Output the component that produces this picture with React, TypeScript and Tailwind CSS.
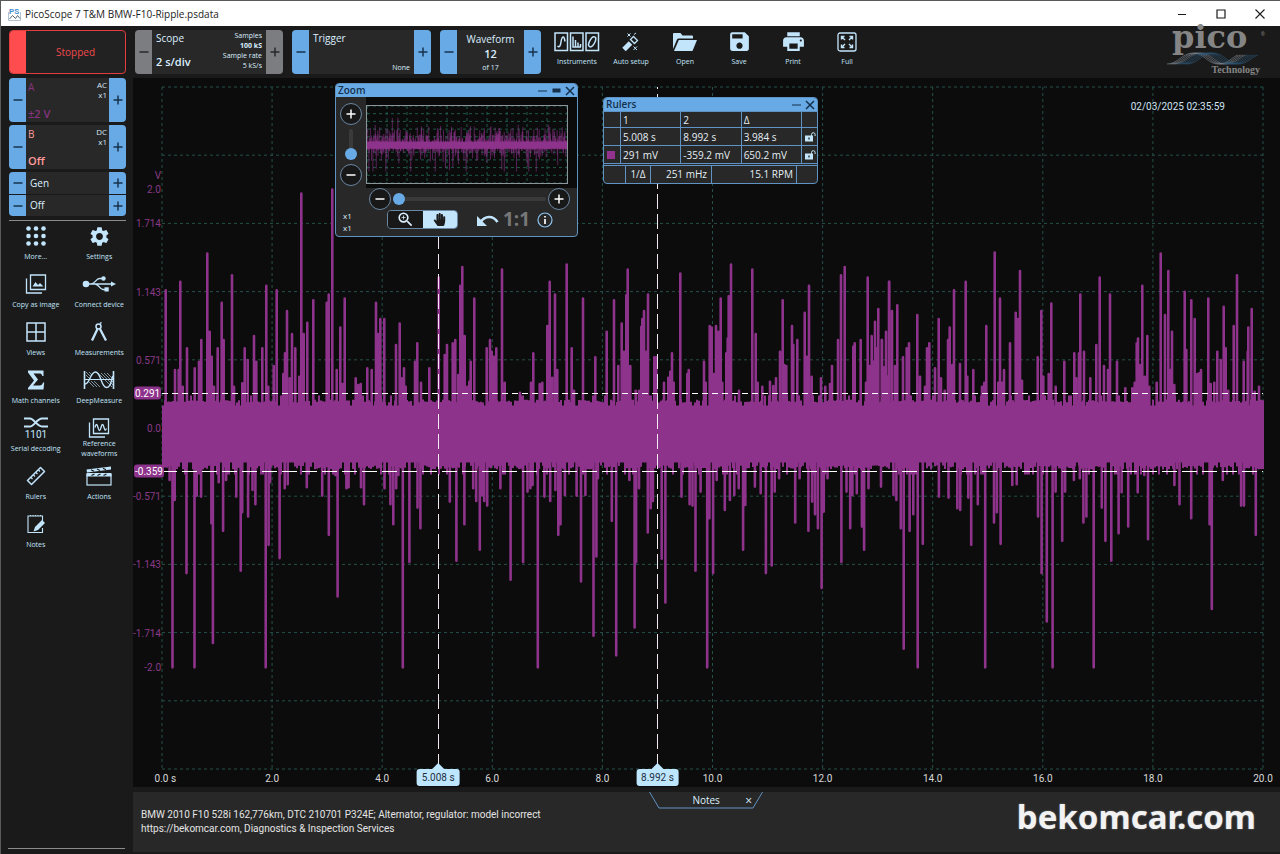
import React from "react";
import { MdSettings, MdSave, MdPrint, MdZoomIn } from "react-icons/md";
import { FaHandPaper } from "react-icons/fa";

/* ---------- waveform data ---------- */

const PLOT_W = 1101;
const PLOT_H = 683;
const V_MAX = 2.857;

type Segment = { x0: number; y0: number; sx: number; sy: number; pts: string };

const PEAKS: Segment[] = [
  {
    x0: -32, y0: 143.5, sx: 3, sy: 3,
    pts: "107,180;151,155;171,355;135,420;146,420;158,470;194,415;207,395;214,330;232,70;239,305;245,380;252,470;263,355;275,218;281,330;306,135;312,470;337,460;344,355;353,390;372,318;379,395;397,355;409,167;415,470;431,408;440,180;460,432;465,370;471,243;479,445;486,312;496,355;508,440;514,-110;521,312;532,278;550,210;590,218;596,193;607,-122;620,420;631,292;638,462;644,205;677,445;685,465;692,462;712,415;725,420;738,218;744,312;751,267;763,267;798,345;809,280;815,445;822,415;827,470;855,395;862,340;873,458;898,415;926,142;944,375;951,345;968,340;976,330;991,167;997,110;1004,318;985,435;1012,470;1018,455;1022,395;1033,205;1070,355;1080,330;1085,365;1092,380;1099,355;1116,118;1124,458",
  },
  {
    x0: 338, y0: 143.5, sx: 3, sy: 3,
    pts: "14,458;60,488;93,458;100,370;119,462;127,458;142,288;149,155;157,443;165,193;172,420;200,103;215,355;222,482;249,205;286,382;320,305;342,210;355,408;365,280;372,365;379,195;383,118;391,408;407,482;417,482;424,290;427,267;432,243;438,365;444,193;463,382;469,382;492,458;505,443;511,425;516,370;521,458;541,130;562,432;566,420;612,395;617,458;629,288;635,292;641,432;648,288;655,305;662,205;667,458;679,370;683,325;686,198;693,103;717,482;757,118;767,312;773,458;787,470;810,455;820,468;828,445;840,365;848,210;853,405;859,408;876,288;880,345;892,330;914,248;920,380;927,167;935,440;963,445;976,470;990,462;996,408;1014,330;1023,135;1034,110;1060,350;1064,340;1082,330;1098,458;1103,142;1109,408;1115,318;1120,395;1125,275;1130,355;1135,237;1145,330;1152,412;1158,305;1167,155",
  },
  {
    x0: 718, y0: 143.5, sx: 3, sy: 3,
    pts: "6,330;12,415;18,305;23,440;28,155;36,243;45,408;52,225;69,382;80,355;87,340;112,255;120,440;135,470;141,355;148,340;165,415;176,267;183,445;194,482;204,330;209,292;217,405;222,180;240,402;257,155;262,440;280,420;306,470;313,458;319,288;344,67;355,458;360,205;366,458;372,420;390,340;407,248;414,267;420,122;426,452;473,382;484,243;490,440;506,432;514,220;527,470;553,395;583,370;589,445;597,370;601,193;612,365;631,445;649,345;659,142;672,408;684,420;690,193;711,395;736,475;757,475;764,458;770,340;774,325;780,405;787,167;794,440;802,318;808,470;830,458;842,70;855,255;865,122;871,420;876,305;883,465;914,185;919,360;934,210;944,267;952,432;958,430;963,420;985,205;992,462;1003,458;1012,365;1022,390;1031,230;1037,355;1045,482;1061,288;1071,135;1091,395;1103,365;1105,292;1115,237;1124,485;1137,470",
  },
];

const TROUGHS: Segment[] = [
  {
    x0: -32, y0: 368.5, sx: 1.3635, sy: 3,
    pts: "54,75;58,638;61,135;77,355;88,638;91,122;97,125;111,205;113,565;121,82;127,228;131,75;145,125;151,348;153,172;161,185;167,105;171,148;185,638;189,270;191,82;204,310;211,100;215,88;241,97;262,122;271,240;280,60;283,425;295,100;298,97;315,97;319,148;347,100;355,148;359,208;363,100;366,60;372,638;381,322;392,158;396,220;436,140;445,318;456,208;468,100;472,138;477,285;480,120;483,138;487,152;505,100;519,375;536,322;542,110;546,100;549,90;556,638;565,125;573,138;580,105;584,240;587,208;593,120;609,122;615,380;621,120;632,543;636,305;638,70;657,198;663,602;681,75;688,518;690,322;694,100;706,233;710,160;713,138;725,312;730,443;752,125;763,148;767,152;771,348;778,110;787,638;790,190;795,355;800,75;811,165;818,135;824,120;830,100;836,285;839,150;852,95;860,115;867,355;875,332;879,110;885,70;907,203;913,70;925,228;930,140;934,178;938,220;943,400;946,170;951,70;970,322;977,110;982,220;985,120;991,115;998,215;1001,285;1007,100;1024,95;1041,120;1045,135;1051,220;1055,582;1063,228;1068,178;1074,638;1081,267;1103,125;1116,128;1128,160;1132,165;1143,128;1147,270;1156,148;1166,638;1178,203;1182,172;1187,267;1203,90;1209,88;1238,185;1243,355;1250,500;1258,638;1262,110;1271,258;1275,110;1287,75;1295,70;1300,203;1304,185;1314,638;1325,158;1330,258;1338,318;1348,235;1352,112;1361,215;1374,112;1383,60;1388,253;1424,90;1431,148;1447,190;1472,208;1475,463;1490,75;1515,152;1519,152;1535,240",
  },
];

function toPath(segments: Segment[]): string {
  return segments
    .flatMap((s) =>
      s.pts.split(";").map((p) => {
        const [px, py] = p.split(",").map(Number);
        return `M${(s.x0 + px / s.sx).toFixed(1)} 345V${(s.y0 + py / s.sy).toFixed(1)}`;
      })
    )
    .join("");
}

function bandPath(): string {
  let seed = 7;
  const rnd = () => {
    seed = (seed * 16807) % 2147483647;
    return seed / 2147483647;
  };
  const top: string[] = [];
  const bottom: string[] = [];
  for (let x = 0; x < PLOT_W; x += 2) {
    const a = rnd();
    const t = a < 0.1 ? 319 : a > 0.9 ? 309 : 313 + rnd() * 3;
    const b = rnd();
    const u = b > 0.84 ? 388 : b < 0.2 ? 376 : 379 + rnd() * 4;
    top.push(`L${x} ${t.toFixed(1)}H${x + 2}`);
    bottom.unshift(`L${x + 2} ${u.toFixed(1)}H${x}`);
  }
  return `M0 345${top.join("")}${bottom.join("")}Z`;
}

const SPIKES = toPath(PEAKS) + toPath(TROUGHS);
const BAND = bandPath();

function Wave({ thin = false }: { thin?: boolean }) {
  const xs = Array.from({ length: 11 }, (_, i) => (i * PLOT_W) / 10);
  const ys = Array.from({ length: 11 }, (_, i) => (i * PLOT_H) / 10).filter((_, i) => i !== 5);
  return (
    <svg
      viewBox={`0 0 ${PLOT_W} ${PLOT_H}`}
      preserveAspectRatio="none"
      className="absolute inset-0 block h-full w-full overflow-visible"
      aria-hidden="true"
    >
      <g stroke={thin ? "#1f5b4a" : "#255049"} strokeWidth="1" strokeDasharray="3 3">
        {xs.map((x) => (
          <line key={x} x1={x} x2={x} y1="0" y2={PLOT_H} vectorEffect="non-scaling-stroke" />
        ))}
        {ys.map((y) => (
          <line key={y} y1={y} y2={y} x1="0" x2={PLOT_W} vectorEffect="non-scaling-stroke" />
        ))}
      </g>
      <path d={SPIKES} stroke="#8e338b" strokeWidth={thin ? 0.6 : 2.6} fill="none" strokeLinecap={thin ? "butt" : "round"} vectorEffect="non-scaling-stroke" />
      <path d={BAND} fill="#8e338b" />
    </svg>
  );
}

/* ---------- icons ---------- */

const ICE = "#c3e5fb";

const Svg = ({ w, h, children }: { w: number; h: number; children: React.ReactNode }) => (
  <svg width={w} height={h} viewBox={`0 0 ${w} ${h}`} fill="none" stroke="currentColor" aria-hidden="true">
    {children}
  </svg>
);

const Minus = () => (
  <Svg w={10} h={10}><path d="M.5 5h9" strokeWidth="1.5" /></Svg>
);
const Plus = () => (
  <Svg w={10} h={10}><path d="M.5 5h9M5 .5v9" strokeWidth="1.5" /></Svg>
);

const InstrumentsIcon = () => (
  <Svg w={46} h={20}>
    <g strokeWidth="1.5">
      <rect x="1" y="1" width="12.5" height="17.5" />
      <rect x="16.5" y="1" width="12.5" height="17.5" />
      <rect x="32" y="1" width="12.5" height="17.5" />
      <path d="M3.5 14c2 2 3-.5 3.500-4s1.500-5.500 2.500-5 1 2 1.500 4.500" />
      <path d="M19 4.500v10.500h8M21.500 8v7M24 10.500V15M26.500 12v3" />
      <ellipse cx="38.200" cy="9.800" rx="2.600" ry="5.500" transform="rotate(28 38.200 9.800)" />
    </g>
  </Svg>
);
const WandIcon = () => (
  <Svg w={20} h={20}>
    <path d="M3 17.500L9.500 11" strokeWidth="5" />
    <path d="M9.500 7.500l4 4 3-3-4-4z" strokeWidth="1.300" />
    <path d="M6.500 1.500l3 3M9.500 1.500l-3 3M13 2.500l2-1.500M12.500 14.500l3.500 3.500M16 14.500l-3.500 3.500" strokeWidth="1" />
  </Svg>
);
const FolderIcon = () => (
  <Svg w={24} h={20}>
    <path d="M0 17V2Q0 1 1 1h6.500l2 2.500H19q1 0 1 1V6.500H5.500Q4.500 6.500 4 7.500z" fill="currentColor" stroke="none" />
    <path d="M5.800 8H24l-4.300 10.500q-.3.500-1 .5H1z" fill="currentColor" stroke="none" />
  </Svg>
);
const FullIcon = () => (
  <Svg w={20} h={20}>
    <rect x="1" y="1" width="18" height="18" rx="2" strokeWidth="1.300" />
    <path d="M4.500 7.500v-3h3M12.500 4.500h3v3M15.500 12.500v3h-3M7.500 15.500h-3v-3M4.500 4.500l3.500 3.500M15.500 4.500l-3.500 3.500M15.500 15.500l-3.500-3.500M4.500 15.500l3.500-3.500" strokeWidth="1.400" />
  </Svg>
);
const DotsIcon = () => (
  <Svg w={20} h={20}>
    {[2.5, 10, 17.5].flatMap((y) => [2.5, 10, 17.5].map((x) => <circle key={`${x}-${y}`} cx={x} cy={y} r="2.300" fill="currentColor" stroke="none" />))}
  </Svg>
);
const CopyImageIcon = () => (
  <Svg w={22} h={20}>
    <path d="M5.500 1h15v14.500h-15zM1.500 4.500v14.500h15.500" strokeWidth="1.300" />
    <path d="M7.500 12.500l3-4.500 2.500 3 2-2 3.500 3.500z" fill="currentColor" stroke="none" />
  </Svg>
);
const UsbIcon = () => (
  <Svg w={34} h={18}>
    <circle cx="4" cy="9" r="3.300" fill="currentColor" stroke="none" />
    <path d="M4 9h26M9 9c4 0 5-5.500 8.500-5.500h3M13 9c4 0 4.500 5.500 8 5.500h2" strokeWidth="1.300" />
    <path d="M29 6.500l5 2.500-5 2.500z" fill="currentColor" stroke="none" />
    <circle cx="21.500" cy="3.500" r="2.200" fill="currentColor" stroke="none" />
    <rect x="22.500" y="12.300" width="4.200" height="4.200" fill="currentColor" stroke="none" />
  </Svg>
);
const ViewsIcon = () => (
  <Svg w={20} h={20}><path d="M1 1h18v18H1zM10 1v18M1 10h18" strokeWidth="1.500" /></Svg>
);
const CompassIcon = () => (
  <Svg w={18} h={20}>
    <circle cx="8.500" cy="4.500" r="2.500" strokeWidth="1.500" />
    <path d="M10 1.500l1.500-1" strokeWidth="1.500" />
    <path d="M7.500 7L2 18.500M10 7l6 11.500" strokeWidth="2.300" />
  </Svg>
);
const SigmaIcon = () => (
  <Svg w={18} h={20}>
    <path d="M1 0.500h15.500V6h-1.200C14.800 4 14 3.500 12 3.500H6.500L11 9.500 6 15.500h6.500c2 0 2.800-.8 3.500-3h1.200l-.7 7H1v-1.500L7 10.500 1 2.500z" fill="currentColor" stroke="none" />
  </Svg>
);
const DeepIcon = () => (
  <Svg w={32} h={20}>
    <path d="M1.500 1v18M30.500 1v18" strokeWidth="1.600" />
    <path d="M2 9.500h28" strokeWidth="1" />
    <path d="M2 14C7 14 7 2 12.500 2S18 17.500 23.500 17.500 28 8 30 6" strokeWidth="1.400" />
    <path d="M3 2l4 4M6 2l3 3M3 5l3 3M15 3l14 14M18 3l12 12M21 3l9 9M24 3l6 6M5 11l6 6M8 11l6 6M11 11l6 6" strokeWidth=".6" />
  </Svg>
);
const SerialIcon = () => (
  <svg width="26" height="22" viewBox="0 0 26 22" fill="none" stroke="currentColor" aria-hidden="true">
    <path d="M1 1.500h6c4 0 7 8 12 8h6M1 9.500h6c4 0 7-8 12-8h6" strokeWidth="2" />
    <text x="13" y="20.500" textAnchor="middle" fontSize="10" fontFamily="Roboto, sans-serif" fill="currentColor" stroke="none">1101</text>
  </svg>
);
const RefWaveIcon = () => (
  <Svg w={22} h={20}>
    <path d="M5.500 1h15v14.500h-15zM1.500 4.500V19h15.500" strokeWidth="1.300" />
    <path d="M7 9.500c1-4 2-4 3 0s2 4 3 0 2-4 3 0 1.500 3 2.500 1" strokeWidth="1.300" />
  </Svg>
);
const RulerIcon = () => (
  <Svg w={20} h={20}>
    <path d="M1.500 14.500L14.500 1.500l4 4L5.500 18.500z" strokeWidth="1.500" strokeLinejoin="round" />
    <path d="M5 11.500l1.500 1.500M7.500 9l1.500 1.500M10 6.500l1.500 1.500M12.500 4l1.500 1.500" strokeWidth="1.200" />
  </Svg>
);
const ClapperIcon = () => (
  <Svg w={26} h={20}>
    <rect x="1" y="8.700" width="24" height="10.300" strokeWidth="1.200" />
    <path d="M.5 3.500L25 .5v3L1 6.500zM.5 7h25v3.500H.5z" fill="currentColor" stroke="none" />
    <path d="M5 3.800l3 1.500M11 3l3 1.500M17 2.200l3 1.500M8.500 8l-3 1.500M14.500 8l-3 1.500M20.500 8l-3 1.500" stroke="#1a1a1a" strokeWidth="1.200" />
  </Svg>
);
const NotesIcon = () => (
  <Svg w={18} h={20}>
    <path d="M15.500 7V2H1v16.500h14.500V14" strokeWidth="1.100" />
    <path d="M3 1.500h11" strokeWidth="1.200" strokeDasharray="1 1.500" />
    <path d="M6.500 17.500l1.500-4.500 7-7 3 3-7 7z" fill="currentColor" stroke="none" />
  </Svg>
);
const UnlockIcon = () => (
  <Svg w={11} h={10}>
    <rect x="0" y="3.500" width="8" height="6" fill="currentColor" stroke="none" />
    <path d="M6.500 4V2.500a1.800 1.800 0 0 1 3.600 0V4" strokeWidth="1" />
    <path d="M4 5.500v2" stroke="#222" strokeWidth="1.300" />
  </Svg>
);
const UndoIcon = () => (
  <Svg w={22} h={14}>
    <path d="M3.500 9C8 2.500 16 2 20.500 9" strokeWidth="2.600" />
    <path d="M0 3v10h10z" fill="currentColor" stroke="none" />
  </Svg>
);

/* ---------- building blocks ---------- */

function Stepper({ label, tone = "blue", children }: { label: string; tone?: "blue" | "grey"; children: React.ReactNode }) {
  const side =
    tone === "blue"
      ? "flex w-[17px] shrink-0 items-center justify-center bg-[#68aae6] text-[#16324c]"
      : "flex w-[17px] shrink-0 items-center justify-center bg-[#7c7d80] text-[#26282a]";
  return (
    <div className="flex h-full overflow-hidden rounded bg-[#282828]">
      <button type="button" aria-label={`${label} down`} className={side}><Minus /></button>
      <div className="flex min-w-0 flex-1">{children}</div>
      <button type="button" aria-label={`${label} up`} className={side}><Plus /></button>
    </div>
  );
}

function Channel({ name, range, coupling, color }: { name: string; range: string; coupling: string; color: string }) {
  return (
    <div className="h-[44px]">
      <Stepper label={`Channel ${name}`}>
        <div className={`flex flex-1 flex-col justify-between pl-[2px] ${color}`}>
          <span className="text-[10px] font-medium leading-[18px]">{name}</span>
          <span className="text-[11px] font-semibold leading-4">{range}</span>
        </div>
        <div className="pr-[2px] text-right text-[8px] leading-[10px] text-[#d5e6f2]">
          <div className="pt-[2px]">{coupling}</div>
          <div>x1</div>
        </div>
      </Stepper>
    </div>
  );
}

function TopTool({ label, children }: { label: string; children: React.ReactNode }) {
  return (
    <button type="button" className="flex w-[54px] flex-col items-center text-[#c3e5fb]">
      <span className="flex h-[23px] items-center justify-center">{children}</span>
      <span className="mt-[3px] text-[7px] leading-[12px]">{label}</span>
    </button>
  );
}

function SideTool({ label, children }: { label: string; children: React.ReactNode }) {
  return (
    <button type="button" className="flex flex-col items-center text-[#c3e5fb]">
      <span className="flex h-5 items-center justify-center">{children}</span>
      <span className="flex h-[22px] items-center whitespace-pre-line text-center text-[7px] leading-[10px]">{label}</span>
    </button>
  );
}

const RoundButton = ({ label, children }: { label: string; children: React.ReactNode }) => (
  <button type="button" aria-label={label} className="flex h-[22px] w-[22px] shrink-0 items-center justify-center rounded-full border border-[#6a87a3] bg-[#181818] text-white">
    {children}
  </button>
);

function ZoomPanel() {
  return (
    <section aria-label="Zoom" className="absolute left-[202px] top-[5px] w-[243px] overflow-hidden rounded border border-[#5f93c4] bg-[#282828] text-[#dcefff]">
      <header className="flex h-[13px] items-center bg-[#68aae6] pl-[2px] pr-[2px] text-[#14304a]">
        <h2 className="flex-1 text-[10px] font-semibold leading-[13px]">Zoom</h2>
        <button type="button" aria-label="Minimise zoom" className="mr-[5px]"><Svg w={9} h={9}><path d="M0 5h9" /></Svg></button>
        <button type="button" aria-label="Dock zoom" className="mr-1"><Svg w={9} h={9}><path d="M.5 4.500h8" strokeWidth="4" /></Svg></button>
        <button type="button" aria-label="Close zoom"><Svg w={10} h={10}><path d="M1 1l8 8M9 1l-8 8" strokeWidth="1.500" /></Svg></button>
      </header>
      <div className="flex">
        <div className="flex w-[30px] flex-col items-center pb-[2px] pt-[6px]">
          <RoundButton label="Zoom in vertically"><Plus /></RoundButton>
          <input
            type="range" aria-label="Vertical zoom" defaultValue={0}
            className="mb-1 mt-1 h-[31px] w-3 appearance-none bg-transparent [direction:rtl] [writing-mode:vertical-lr] [&::-webkit-slider-runnable-track]:w-1 [&::-webkit-slider-runnable-track]:rounded [&::-webkit-slider-runnable-track]:bg-[#3a3a3a] [&::-webkit-slider-thumb]:-ml-1 [&::-webkit-slider-thumb]:h-3 [&::-webkit-slider-thumb]:w-3 [&::-webkit-slider-thumb]:appearance-none [&::-webkit-slider-thumb]:rounded-full [&::-webkit-slider-thumb]:bg-[#68aae6]"
          />
          <RoundButton label="Zoom out vertically"><Minus /></RoundButton>
        </div>
        <div className="flex-1 bg-[#0b0b0b] pb-1 pr-[9px] pt-2">
          <div className="relative h-[79px] overflow-hidden border border-[#8d9499]"><Wave thin /></div>
        </div>
      </div>
      <div className="flex items-center pl-[33px] pr-[7px]">
        <RoundButton label="Zoom out horizontally"><Minus /></RoundButton>
        <input
          type="range" aria-label="Horizontal zoom" defaultValue={0}
          className="mx-[2px] h-3 min-w-0 flex-1 appearance-none bg-transparent [&::-webkit-slider-runnable-track]:h-1 [&::-webkit-slider-runnable-track]:rounded [&::-webkit-slider-runnable-track]:bg-[#3a3a3a] [&::-webkit-slider-thumb]:-mt-1 [&::-webkit-slider-thumb]:h-3 [&::-webkit-slider-thumb]:w-3 [&::-webkit-slider-thumb]:appearance-none [&::-webkit-slider-thumb]:rounded-full [&::-webkit-slider-thumb]:bg-[#68aae6]"
        />
        <RoundButton label="Zoom in horizontally"><Plus /></RoundButton>
      </div>
      <div className="flex h-[26px] items-start pl-[7px]">
        <div className="w-[44px] text-[8px] leading-[12px]">
          <div>x1</div>
          <div>x1</div>
        </div>
        <div className="flex h-[19px] w-[71px] overflow-hidden rounded border border-[#6a87a3]">
          <button type="button" aria-label="Zoom tool" className="flex flex-1 items-center justify-center bg-[#181818] text-[#dcefff]"><MdZoomIn size={19} /></button>
          <button type="button" aria-label="Pan tool" className="flex flex-1 items-center justify-center bg-[#c3e5fb] text-[#1c1c1c]"><FaHandPaper size={13} /></button>
        </div>
        <button type="button" aria-label="Undo zoom" className="ml-[19px] mt-[3px] text-[#c3e5fb]"><UndoIcon /></button>
        <button type="button" className="ml-[4px] text-[19px] font-bold leading-[19px] text-[#77787a]">1:1</button>
        <button type="button" aria-label="Zoom information" className="ml-[7px] mt-[2px] text-[#8fc4ee]">
          <Svg w={16} h={16}><circle cx="8" cy="8" r="7" strokeWidth="1.200" /><path d="M8 7v5M8 4v1.600" stroke="#fff" strokeWidth="1.700" /></Svg>
        </button>
      </div>
    </section>
  );
}

function RulersPanel() {
  const cell = "border-r border-t border-[#5f93c4] px-[2px] py-0 font-normal";
  const lock = "border-t border-[#5f93c4] py-0 pl-[3px] pr-0 text-[#c3e5fb]";
  return (
    <section aria-label="Rulers" className="absolute left-[470px] top-[19px] w-[215px] overflow-hidden rounded border border-[#5f93c4] bg-[#282828] text-[10px] leading-[14px] text-[#e6eef4]">
      <header className="flex h-[13px] items-center bg-[#68aae6] pl-[2px] pr-[2px] text-[#14304a]">
        <h2 className="flex-1 text-[10px] font-semibold leading-[13px]">Rulers</h2>
        <button type="button" aria-label="Minimise rulers" className="mr-1"><Svg w={9} h={9}><path d="M0 5h9" /></Svg></button>
        <button type="button" aria-label="Close rulers"><Svg w={10} h={10}><path d="M1 1l8 8M9 1l-8 8" strokeWidth="1.500" /></Svg></button>
      </header>
      <table className="w-full table-fixed border-separate border-spacing-0 border-b border-[#5f93c4] text-left">
        <colgroup>
          <col className="w-[17px]" /><col /><col /><col /><col className="w-[15px]" />
        </colgroup>
        <tbody>
          <tr className="h-4">
            <td className={cell} />
            <th className={cell}>1</th><th className={cell}>2</th><th className={cell}>Δ</th>
            <td className={lock} />
          </tr>
          <tr className="h-[18px]">
            <td className={cell} />
            <td className={cell}>5.008 s</td><td className={cell}>8.992 s</td><td className={cell}>3.984 s</td>
            <td className={lock}><UnlockIcon /></td>
          </tr>
          <tr className="h-[18px]">
            <td className={cell}><span className="ml-[1px] block h-2 w-2 bg-[#93338f]" /></td>
            <td className={cell}>291 mV</td><td className={cell}>-359.2 mV</td><td className={cell}>650.2 mV</td>
            <td className={lock}><UnlockIcon /></td>
          </tr>
        </tbody>
      </table>
      <div className="mt-[1px] flex h-[18px] items-center border-t border-[#5f93c4] pl-[21px] pr-[20px] leading-[17px]">
        <span className="w-[26px] border-x border-[#5f93c4] text-center">1/Δ</span>
        <span className="w-[61px] border-r border-[#5f93c4] pr-1 text-right">251 mHz</span>
        <span className="flex-1 border-r border-[#5f93c4] pr-[3px] text-right">15.1 RPM</span>
      </div>
    </section>
  );
}

/* ---------- chart ---------- */

const Y_LABELS = ["2.0", "1.714", "1.143", "0.571", "0.0", "-0.571", "-1.143", "-1.714", "-2.0"];
const X_LABELS = ["0.0 s", "2.0", "4.0", "6.0", "8.0", "10.0", "12.0", "14.0", "16.0", "18.0", "20.0"];
const TIME_RULERS = [5.008, 8.992];
const VOLT_RULERS = [
  { v: 0.291, dash: "repeating-linear-gradient(90deg,#fff 0 6px,transparent 6px 10px)" },
  { v: -0.359, dash: "repeating-linear-gradient(90deg,#fff 0 15px,transparent 15px 20px)" },
];
const yPct = (v: number) => `${((V_MAX - v) / (2 * V_MAX)) * 100}%`;
const xPct = (t: number) => `${(t / 20) * 100}%`;

function Chart() {
  return (
    <main className="relative flex flex-1 flex-col bg-[#0c0c0c] pr-[17px] pt-[9px] font-[Roboto,sans-serif] text-[10px] leading-[13px]">
      <div className="flex flex-1">
        <div className="relative w-[29px] text-[#8a3a87]">
          <span className="absolute right-[1px] -translate-y-1/2" style={{ top: "12.9%" }}>V</span>
          {Y_LABELS.map((l) => (
            <span key={l} className="absolute right-[1px] -translate-y-1/2" style={{ top: yPct(Number(l)) }}>{l}</span>
          ))}
        </div>
        <div className="relative min-w-0 flex-1">
          <Wave />
          {VOLT_RULERS.map((r) => (
            <div key={r.v} className="absolute left-0 right-0 h-px" style={{ top: yPct(r.v), backgroundImage: r.dash }}>
              <span className="absolute -left-[28px] -translate-y-1/2 rounded-[3px] bg-[#8e338b] px-[1px] text-white">{r.v.toFixed(3)}</span>
            </div>
          ))}
          {TIME_RULERS.map((t) => (
            <div key={t} className="absolute bottom-0 top-0 w-px bg-[repeating-linear-gradient(0deg,#f2e9f2_0_15px,transparent_15px_20px)]" style={{ left: xPct(t) }}>
              <span className="absolute left-1/2 top-full z-10 -translate-x-1/2 whitespace-nowrap rounded-[3px] bg-[#bfe6ff] px-[5px] py-[2px] leading-[13px] text-[#1d3040]">
                <span className="absolute -top-[6px] left-1/2 h-[7px] w-[14px] -translate-x-1/2 bg-[#bfe6ff] [clip-path:polygon(50%_0,100%_100%,0_100%)]" />
                {t.toFixed(3)} s
              </span>
            </div>
          ))}
          <time className="absolute right-[38px] top-[13px] text-[#cfe3f2]">02/03/2025 02:35:59</time>
        </div>
      </div>
      <div className="relative ml-[29px] h-[18px] text-[#dadada]">
        {X_LABELS.map((l, i) => (
          <span key={l} className="absolute top-[3px] -translate-x-1/2 whitespace-nowrap" style={{ left: i === 0 ? "0.3%" : xPct(i * 2) }}>{l}</span>
        ))}
      </div>
      <div className="font-['Open_Sans','Noto_Sans',sans-serif]">
        <ZoomPanel />
        <RulersPanel />
      </div>
    </main>
  );
}

function PicoLogo() {
  const lines = Array.from({ length: 9 }, (_, i) => i);
  return (
    <div className="relative ml-auto mr-[14px] h-[46px] w-[100px] text-[#858585]">
      <svg viewBox="0 0 100 46" className="absolute inset-0 h-full w-full" fill="none" aria-hidden="true">
        {lines.map((i) => (
          <path
            key={i}
            d={`M${1 + i * 2.5} 35C${12 + i * 2.5} 35 ${16 + i * 2.5} 24 ${27 + i * 2.5} 24S${42 + i * 2.5} 35 ${52 + i * 2.5} 35 ${66 + i * 2.5} 28 ${72 + i * 2.5} 26`}
            stroke={i < 4 ? "#7f8b96" : "#2d5675"}
            strokeWidth=".6"
          />
        ))}
      </svg>
      <span className="absolute left-[6px] top-[-11px] font-['DejaVu_Serif',serif] text-[32px] font-bold leading-[38px]">pico</span>
      <span className="absolute right-[1px] top-[3px] text-[5px] leading-[5px]">®</span>
      <span className="absolute right-[6px] top-[36px] font-['Liberation_Serif',serif] text-[10px] font-bold leading-[10px]">Technology</span>
    </div>
  );
}

/* ---------- page ---------- */

export default function App() {
  return (
    <div className="flex min-h-screen flex-col border-l border-t border-[#5a5a5a] bg-[#1a1a1a] font-['Open_Sans','Noto_Sans',sans-serif] text-[10px] text-[#dcefff]">
      <div className="flex h-[25px] items-center bg-white pl-[7px] text-[#1b1b1b]">
        <svg width="13" height="14" viewBox="0 0 13 14" fill="none" aria-hidden="true">
          <path d="M.5 5V13.500h12V5" stroke="#9cb4c8" strokeWidth=".8" />
          <path d="M1.500 12l3-3.500 3 3 2-3 2.500 3" stroke="#53677a" strokeWidth="1" />
          <text x="1" y="6.500" fontSize="8" fontWeight="bold" fontFamily="Roboto, sans-serif" fill="#4a90d0">PS</text>
        </svg>
        <h1 className="ml-1 flex-1 text-[10px] leading-[14px]">PicoScope 7 T&amp;M BMW-F10-Ripple.psdata</h1>
        <div className="flex items-center gap-[29px] pr-[15px]">
          <button type="button" aria-label="Minimise"><Svg w={10} h={10}><path d="M1 5.500h8" /></Svg></button>
          <button type="button" aria-label="Maximise"><Svg w={10} h={10}><path d="M1 1h8v8H1z" strokeWidth="1.200" /></Svg></button>
          <button type="button" aria-label="Close"><Svg w={10} h={10}><path d="M.5 .5l9 9M9.500 .5l-9 9" strokeWidth="1.100" /></Svg></button>
        </div>
      </div>

      <div className="flex h-[52px] items-center py-1 pl-2">
        <button type="button" className="flex h-full w-[117px] overflow-hidden rounded border border-[#e23c3f] bg-[#222] text-[#f04a4c]">
          <span className="h-full w-4 bg-[#ff4d4f]" />
          <span className="flex h-full flex-1 items-center justify-center text-[10px]">Stopped</span>
        </button>
        <div className="ml-[9px] h-full w-[148px]">
          <Stepper label="Timebase" tone="grey">
            <div className="flex flex-1 flex-col justify-between pb-1 pl-1">
              <span className="text-[10px] leading-[16px]">Scope</span>
              <span className="whitespace-nowrap text-[11px] font-semibold leading-4">2 s/div</span>
            </div>
            <div className="whitespace-nowrap pr-1 pt-[1px] text-right text-[7px] leading-[10px]">
              <div>Samples</div>
              <div className="font-bold">100 kS</div>
              <div>Sample rate</div>
              <div>5 kS/s</div>
            </div>
          </Stepper>
        </div>
        <div className="ml-[9px] h-full w-[139px]">
          <Stepper label="Trigger">
            <span className="pl-1 text-[10px] leading-[16px]">Trigger</span>
            <span className="ml-auto self-end pb-[1px] pr-1 text-[7px] leading-[10px]">None</span>
          </Stepper>
        </div>
        <div className="ml-[9px] h-full w-[101px]">
          <Stepper label="Waveform">
            <div className="flex flex-1 flex-col items-center">
              <span className="text-[10px] leading-[18px]">Waveform</span>
              <span className="text-[11px] font-semibold leading-[12px]">12</span>
              <span className="text-[7px] leading-[15px]">of 17</span>
            </div>
          </Stepper>
        </div>
        <div className="ml-[9px] flex h-full items-start">
          <TopTool label="Instruments"><InstrumentsIcon /></TopTool>
          <TopTool label="Auto setup"><WandIcon /></TopTool>
          <TopTool label="Open"><FolderIcon /></TopTool>
          <TopTool label="Save"><MdSave size={25} /></TopTool>
          <TopTool label="Print"><MdPrint size={25} /></TopTool>
          <TopTool label="Full"><FullIcon /></TopTool>
        </div>
        <PicoLogo />
      </div>

      <div className="flex flex-1">
        <aside className="flex w-[132px] shrink-0 flex-col">
          <div className="ml-2 mr-[7px] flex flex-col gap-[3px] border-b border-[#8b8b8b] pb-1">
            <Channel name="A" range="±2 V" coupling="AC" color="text-[#86347f]" />
            <Channel name="B" range="Off" coupling="DC" color="text-[#ff9c9c]" />
            <div className="flex flex-col gap-px overflow-hidden rounded">
              <div className="h-[22px] [&>div]:rounded-none"><Stepper label="Generator"><span className="self-center pl-1">Gen</span></Stepper></div>
              <div className="h-[21px] [&>div]:rounded-none"><Stepper label="Generator state"><span className="self-center pl-1">Off</span></Stepper></div>
            </div>
          </div>
          <nav className="ml-[3px] mr-[2px] mt-[5px] grid grid-cols-2 gap-y-[6px]">
            <SideTool label="More..."><DotsIcon /></SideTool>
            <SideTool label="Settings"><MdSettings size={23} color={ICE} /></SideTool>
            <SideTool label="Copy as image"><CopyImageIcon /></SideTool>
            <SideTool label="Connect device"><UsbIcon /></SideTool>
            <SideTool label="Views"><ViewsIcon /></SideTool>
            <SideTool label="Measurements"><CompassIcon /></SideTool>
            <SideTool label="Math channels"><SigmaIcon /></SideTool>
            <SideTool label="DeepMeasure"><DeepIcon /></SideTool>
            <SideTool label="Serial decoding"><SerialIcon /></SideTool>
            <SideTool label={"Reference\nwaveforms"}><RefWaveIcon /></SideTool>
            <SideTool label="Rulers"><RulerIcon /></SideTool>
            <SideTool label="Actions"><ClapperIcon /></SideTool>
            <SideTool label="Notes"><NotesIcon /></SideTool>
          </nav>
          <div className="mb-[5px] ml-[7px] mr-2 mt-auto h-px bg-[#8b8b8b]" />
        </aside>

        <div className="flex min-w-0 flex-1 flex-col">
          <Chart />
          <section aria-label="Notes" className="relative mb-[2px] mt-[5px] flex h-[60px] items-start bg-[#282828]">
            <p className="pl-2 pt-4 font-[Roboto,sans-serif] text-[10px] leading-[14px] text-[#e4e4e4]">
              BMW 2010 F10 528i 162,776km, DTC 210701 P324E; Alternator, regulator: model incorrect
              <br />
              https://bekomcar.com, Diagnostics &amp; Inspection Services
            </p>
            <div className="absolute left-[45%] top-0 flex h-[17px] w-[114px] items-center justify-center text-[10px]">
              <svg viewBox="0 0 114 17" className="absolute inset-0 h-full w-full" fill="none" stroke="#5f93c4" aria-hidden="true">
                <path d="M.5 0l9.500 16h94L113.500 0" />
              </svg>
              <span className="relative">Notes</span>
              <button type="button" aria-label="Close notes" className="absolute right-[11px] text-[12px] leading-[16px]">×</button>
            </div>
            <span className="ml-auto pr-[24px] font-['Noto_Sans',sans-serif] text-[33px] font-bold leading-[50px] text-[#f2f2f2] [text-shadow:0_0_2px_#777]">bekomcar.com</span>
          </section>
        </div>
      </div>
    </div>
  );
}
